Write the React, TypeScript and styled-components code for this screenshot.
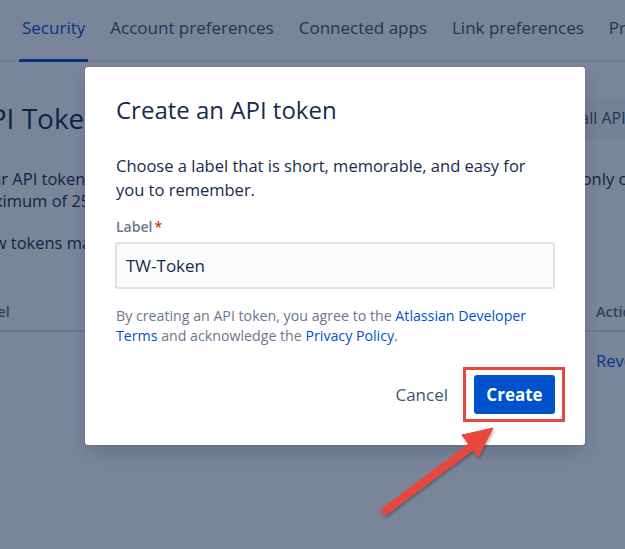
import React from "react";
import styled, { createGlobalStyle } from "styled-components";

const GlobalStyle = createGlobalStyle`
  html, body {
    margin: 0;
    padding: 0;
    width: 625px;
    height: 549px;
    overflow: hidden;
    background: #ffffff;
  }
  body {
    font-family: "Open Sans", "Noto Sans", sans-serif;
    color: #172b4d;
  }
  * { box-sizing: border-box; }
`;

const Page = styled.div`
  position: relative;
  width: 625px;
  height: 549px;
  overflow: hidden;
  background: #ffffff;
`;

const TabBar = styled.nav`
  display: flex;
  align-items: flex-end;
  gap: 19px;
  height: 62px;
  padding-left: 19px;
  border-bottom: 2px solid #ebecf0;
`;

const Tab = styled.div<{ $active?: boolean }>`
  flex: none;
  white-space: nowrap;
  padding: 0 3px 19px;
  margin-bottom: -2px;
  font-size: 17px;
  line-height: 24px;
  color: ${(p) => (p.$active ? "#0052cc" : "#42526e")};
  border-bottom: 3px solid ${(p) => (p.$active ? "#0052cc" : "transparent")};
`;

const Content = styled.main`
  width: 720px;
  margin-left: -28px;
  padding-top: 36px;
`;

const HeaderRow = styled.div`
  display: flex;
  align-items: center;
  justify-content: space-between;
`;

const Heading = styled.h1`
  margin: 0;
  font-size: 28px;
  line-height: 36px;
  font-weight: 500;
  color: #172b4d;
`;

const GhostButton = styled.button`
  height: 40px;
  padding: 0 12px;
  border: none;
  border-radius: 3px;
  background: rgba(9, 30, 66, 0.04);
  font-family: inherit;
  font-size: 16px;
  font-weight: 500;
  color: #42526e;
  white-space: nowrap;
`;

const Para = styled.p<{ $top: number }>`
  margin: ${(p) => p.$top}px 0 0;
  font-size: 16.5px;
  line-height: 22px;
  color: #172b4d;
`;

const Line = styled.span<{ $shift?: number }>`
  display: block;
  white-space: nowrap;
  margin-left: ${(p) => p.$shift ?? 0}px;
`;

const Table = styled.div`
  margin-top: 38px;
`;

const TableRow = styled.div<{ $head?: boolean }>`
  display: grid;
  grid-template-columns: 1fr 96px;
  align-items: center;
  height: ${(p) => (p.$head ? "40px" : "56px")};
  border-bottom: ${(p) => (p.$head ? "2px solid #dfe1e6" : "none")};
  font-size: ${(p) => (p.$head ? "14.5px" : "16.5px")};
  font-weight: ${(p) => (p.$head ? 600 : 400)};
  color: ${(p) => (p.$head ? "#5e6c84" : "#172b4d")};
`;

const Cell = styled.div`
  white-space: nowrap;
`;

const LinkCell = styled.div`
  white-space: nowrap;
  color: #0052cc;
`;

const Blanket = styled.div`
  position: absolute;
  inset: 0;
  background: rgba(9, 30, 66, 0.54);
`;

const Modal = styled.section`
  position: absolute;
  top: 67px;
  left: 85px;
  width: 500px;
  height: 378px;
  background: #ffffff;
  border-radius: 3px;
  box-shadow: 0 0 1px rgba(9, 30, 66, 0.31), 0 8px 16px -4px rgba(9, 30, 66, 0.25);
  padding: 29px 30px 31px 31px;
  display: flex;
  flex-direction: column;
`;

const Title = styled.h2`
  margin: 0;
  font-size: 24px;
  line-height: 28px;
  font-weight: 500;
  color: #172b4d;
`;

const Body = styled.div`
  margin-top: 30px;
  display: flex;
  flex-direction: column;
`;

const Intro = styled.p`
  margin: 0;
  font-size: 16.5px;
  line-height: 24px;
  color: #172b4d;
`;

const FieldLabel = styled.label`
  margin-top: 17px;
  font-size: 14px;
  line-height: 16px;
  font-weight: 600;
  color: #6b778c;
`;

const Required = styled.span`
  color: #de350b;
  margin-left: 2px;
`;

const Input = styled.div`
  margin-top: 7px;
  width: 440px;
  height: 47px;
  margin-left: -1px;
  border: 2px solid #dfe1e6;
  border-radius: 3px;
  background: #fafbfc;
  padding: 0 9px;
  display: flex;
  align-items: center;
  font-size: 17px;
  color: #172b4d;
`;

const Disclaimer = styled.p`
  margin: 17px 0 0;
  font-size: 14.2px;
  line-height: 20px;
  color: #6b778c;
`;

const A = styled.a`
  color: #0052cc;
  text-decoration: none;
`;

const Footer = styled.div`
  margin-top: auto;
  display: flex;
  justify-content: flex-end;
  align-items: center;
  gap: 14px;
`;

const SubtleButton = styled.button`
  height: 39px;
  padding: 0 12px;
  border: none;
  background: transparent;
  font-family: inherit;
  font-size: 17px;
  font-weight: 500;
  color: #42526e;
`;

const Highlight = styled.div`
  position: relative;
`;

const PrimaryButton = styled.button`
  height: 39px;
  width: 81px;
  padding: 0;
  border: none;
  border-radius: 3px;
  background: #0052cc;
  font-family: inherit;
  font-size: 17px;
  font-weight: 700;
  color: #ffffff;
`;

const RedBox = styled.div`
  position: absolute;
  left: -11px;
  top: -8px;
  right: -10px;
  bottom: -8px;
  border: 3px solid #e8473e;
  pointer-events: none;
`;

const Arrow = styled.svg`
  position: absolute;
  left: 370px;
  top: 420px;
  overflow: visible;
`;

export default function App() {
  return (
    <>
      <GlobalStyle />
      <Page>
        <TabBar>
          <Tab $active>Security</Tab>
          <Tab>Account preferences</Tab>
          <Tab>Connected apps</Tab>
          <Tab>Link preferences</Tab>
          <Tab>Product settings</Tab>
        </TabBar>
        <Content>
          <HeaderRow>
            <Heading>API Tokens</Heading>
            <GhostButton>Revoke all API tokens</GhostButton>
          </HeaderRow>
          <Para $top={30}>
            <Line>Your API tokens need to be treated as securely as any other password. You can only create</Line>
            <Line $shift={-16}>a maximum of 25 API tokens.</Line>
          </Para>
          <Para $top={20}>
            <Line>New tokens may take a few minutes to become active.</Line>
          </Para>
          <Table>
            <TableRow $head>
              <Cell>Label</Cell>
              <Cell>Actions</Cell>
            </TableRow>
            <TableRow>
              <Cell />
              <LinkCell>Revoke</LinkCell>
            </TableRow>
          </Table>
        </Content>
        <Blanket />
        <Modal>
          <Title>Create an API token</Title>
          <Body>
            <Intro>
              Choose a label that is short, memorable, and easy for you to remember.
            </Intro>
            <FieldLabel>
              Label<Required>*</Required>
            </FieldLabel>
            <Input>TW-Token</Input>
            <Disclaimer>
              By creating an API token, you agree to the <A>Atlassian Developer Terms</A> and
              acknowledge the <A>Privacy Policy</A>.
            </Disclaimer>
          </Body>
          <Footer>
            <SubtleButton>Cancel</SubtleButton>
            <Highlight>
              <PrimaryButton>Create</PrimaryButton>
              <RedBox />
            </Highlight>
          </Footer>
        </Modal>
        <Arrow width="140" height="110" viewBox="0 0 140 110">
          <defs>
            <filter id="sh" x="-20%" y="-20%" width="140%" height="140%">
              <feDropShadow dx="1" dy="2" stdDeviation="1.5" floodColor="#000" floodOpacity="0.3" />
            </filter>
          </defs>
          <g filter="url(#sh)" fill="#e8473e" stroke="#e8473e">
            <line x1="15" y1="91" x2="102" y2="26" strokeWidth="8" strokeLinecap="round" />
            <polygon points="123,8 92,15 108,37" strokeWidth="1" strokeLinejoin="round" />
          </g>
        </Arrow>
      </Page>
    </>
  );
}
